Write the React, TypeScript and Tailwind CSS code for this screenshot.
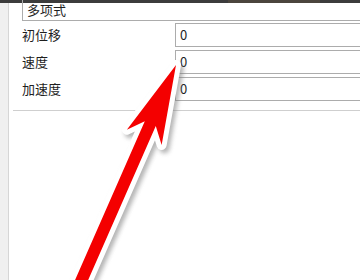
import type { FC } from "react";

const FONT = { fontFamily: '"Noto Sans CJK SC", "Noto Sans", sans-serif' };

const fields = ["初位移", "速度", "加速度"];

const Arrow: FC = () => (
  <svg
    className="pointer-events-none absolute inset-0"
    width={360}
    height={280}
    viewBox="0 0 360 280"
  >
    <defs>
      <filter id="shade" x="-30%" y="-30%" width="160%" height="160%">
        <feGaussianBlur stdDeviation="2.2" />
      </filter>
    </defs>
    <g transform="translate(176 65) rotate(23.7)">
      <path
        d="M0 0 L19 79 L6 64 L6 270 L-6 270 L-6 64 L-19 79 Z"
        fill="#7a7a7a"
        stroke="#7a7a7a"
        strokeWidth={10}
        strokeLinejoin="round"
        opacity={0.55}
        filter="url(#shade)"
        transform="translate(4 2)"
      />
      <path
        d="M0 0 L19 79 L6 64 L6 270 L-6 270 L-6 64 L-19 79 Z"
        fill="#ffffff"
        stroke="#ffffff"
        strokeWidth={10}
        strokeLinejoin="round"
      />
      <path
        d="M0 0 L19 79 L6 64 L6 270 L-6 270 L-6 64 L-19 79 Z"
        fill="#f40000"
      />
    </g>
  </svg>
);

export default function App() {
  return (
    <div
      className="relative flex h-[280px] w-[360px] flex-col overflow-hidden bg-white text-[13px] text-[#1e1e1e]"
      style={FONT}
    >
      <div className="flex h-[3px] shrink-0 bg-[#3c3c3c]">
        <div className="ml-[228px] w-[92px] bg-[#4b453d]" />
      </div>
      <div className="flex flex-1">
        <div className="w-[9px] shrink-0 border-r border-[#d6d6d6] bg-[#f0f0f0]" />
        <div className="-mr-4 flex flex-1 flex-col">
          <div className="ml-[13px] mt-[-4px] flex h-[22px] items-center border border-[#acacac] pl-[4px]">
            多项式
          </div>
          <div className="ml-[13px] mt-[2px] flex flex-col gap-[3px]">
            {fields.map((f) => (
              <div key={f} className="flex h-[24px] items-center">
                <span className="w-[153px] shrink-0">{f}</span>
                <div className="flex h-full flex-1 items-center border border-[#acacac] pl-[4px]">
                  0
                </div>
              </div>
            ))}
          </div>
          <div className="ml-[4px] mt-[9px] border-t border-[#cfcfcf]" />
        </div>
      </div>
      <Arrow />
    </div>
  );
}
